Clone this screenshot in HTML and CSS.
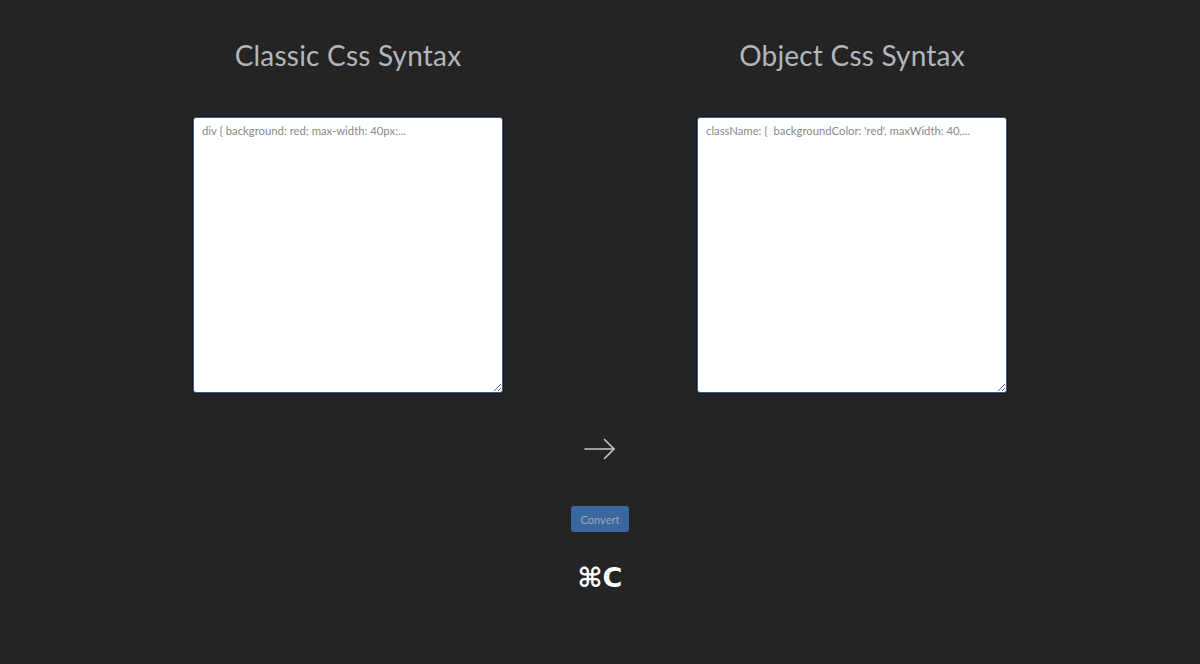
FILE: index.html
```html
<!DOCTYPE html>
<html>
<head>
<meta charset="utf-8">
<link rel="stylesheet" href="styles.css">
</head>
<body>
<main class="page">
  <section class="columns">
    <div class="col">
      <h1 class="title">Classic Css Syntax</h1>
      <textarea class="editor" placeholder="div { background: red; max-width: 40px;..."></textarea>
    </div>
    <div class="col">
      <h1 class="title">Object Css Syntax</h1>
      <textarea class="editor" placeholder="className: {  backgroundColor: 'red', maxWidth: 40,..."></textarea>
    </div>
  </section>
  <div class="arrow">
    <svg width="32" height="22" viewBox="0 0 32 22" fill="none" stroke="#c4c8cf" stroke-width="1.6" stroke-linecap="round" stroke-linejoin="round">
      <path d="M1 11 H30"/>
      <path d="M20.5 1.5 L30 11 L20.5 20.5"/>
    </svg>
  </div>
  <button class="convert">Convert</button>
  <div class="shortcut">⌘C</div>
</main>
</body>
</html>
```

FILE: styles.css
```css
html, body {
  margin: 0;
  padding: 0;
  background: #242424;
  height: 100%;
}
.page {
  display: flex;
  flex-direction: column;
  align-items: center;
  font-family: Lato, "Noto Sans", sans-serif;
}
.columns {
  display: flex;
  justify-content: center;
  gap: 194px;
  padding-top: 36px;
}
.col {
  display: flex;
  flex-direction: column;
  align-items: center;
  width: 310px;
}
.title {
  margin: 0;
  font-weight: 400;
  font-size: 28px;
  line-height: 38px;
  color: #b3b6bb;
  letter-spacing: 0.2px;
}
.editor {
  margin-top: 43px;
  width: 310px;
  height: 276px;
  box-sizing: border-box;
  border: 1px solid #3c5f8a;
  border-radius: 3px;
  background: #fff;
  padding: 6px 8px;
  font-family: Lato, "Noto Sans", sans-serif;
  font-size: 11.3px;
  color: #333;
  resize: both;
  outline: none;
  box-shadow: 0 0 0 1px #1a1a1a;
}
.editor::placeholder {
  color: #8a8a8a;
}
.arrow {
  margin-top: 45px;
  height: 22px;
  display: flex;
}
.convert {
  margin-top: 46px;
  width: 58px;
  height: 26px;
  background: #3a679d;
  color: #98a8bb;
  border: none;
  border-radius: 3px;
  font-family: Lato, "Noto Sans", sans-serif;
  font-size: 11px;
  padding: 0;
}
.shortcut {
  margin-top: 30px;
  color: #fff;
  font-family: "DejaVu Sans", sans-serif;
  font-weight: 700;
  font-size: 27px;
  line-height: 32px;
}
```
